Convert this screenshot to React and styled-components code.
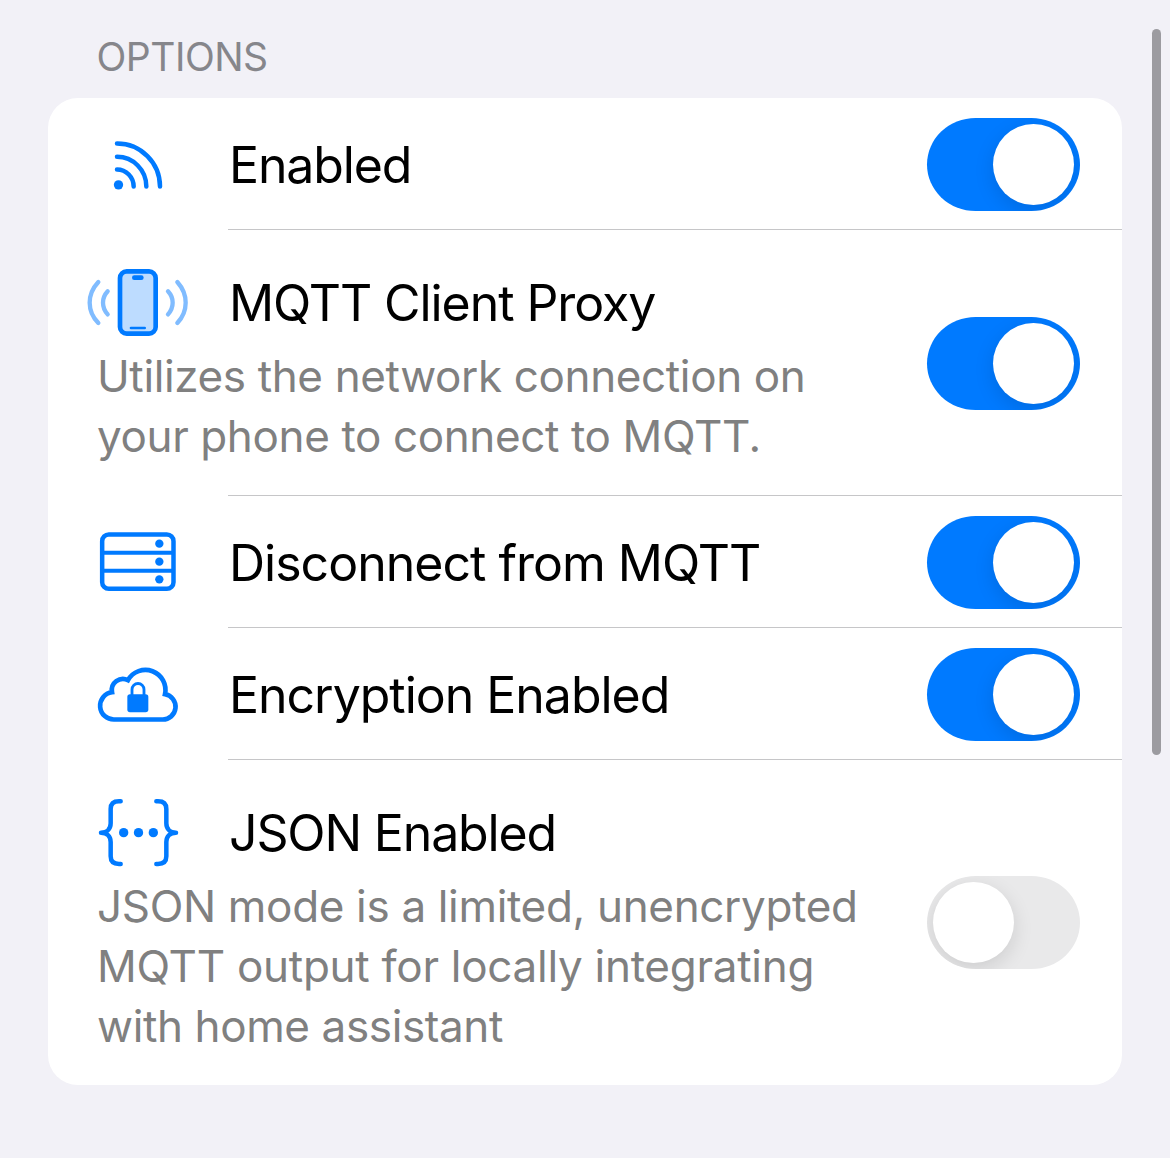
import React, { useState } from "react";
import styled, { createGlobalStyle } from "styled-components";

const BLUE = "#007aff";

const GlobalStyle = createGlobalStyle`
  * { box-sizing: border-box; }
  body {
    margin: 0;
    background: #f2f1f7;
    font-family: Inter, "Liberation Sans", sans-serif;
    font-feature-settings: "calt" 0;
  }
`;

const Screen = styled.main`
  position: relative;
  height: 1158px;
  padding: 26px 48px 0;
  overflow: hidden;
`;

const SectionTitle = styled.h2`
  margin: 0;
  height: 72px;
  padding-left: 48.5px;
  font-size: 39px;
  line-height: 62px;
  font-weight: 400;
  letter-spacing: -0.5px;
  color: #86868b;
`;

const Card = styled.section`
  background: #fff;
  border-radius: 30px;
  overflow: hidden;
`;

const Row = styled.div`
  display: flex;
  align-items: center;
  justify-content: space-between;
  height: ${(p) => p.$height}px;
  padding: 0 42px 0 49px;
`;

const Content = styled.div`
  display: flex;
  flex-direction: column;
  gap: 12px;
  padding-top: ${(p) => (p.$detailed ? 13 : 4)}px;
`;

const Heading = styled.div`
  display: flex;
  align-items: center;
  height: 61px;
`;

const Glyph = styled.svg`
  flex: none;
  width: 120px;
  height: 90px;
  margin: 0 29px 0 -17px;
  fill: none;
  stroke: ${BLUE};
  stroke-linecap: round;
  stroke-linejoin: round;
`;

const Label = styled.span`
  font-size: 50px;
  line-height: 61px;
  letter-spacing: ${(p) => p.$tracking}px;
  color: #000;
  white-space: nowrap;
`;

const Detail = styled.p`
  margin: 0;
  font-size: 44px;
  line-height: 60px;
  color: #808080;
  white-space: nowrap;
`;

const DetailLine = styled.span`
  display: block;
  letter-spacing: ${(p) => p.$tracking}px;
`;

const Divider = styled.div`
  height: 1px;
  margin-left: 180px;
  background: #c6c6c8;
`;

const Track = styled.button`
  display: flex;
  flex: none;
  align-items: center;
  justify-content: ${(p) => (p.$on ? "flex-end" : "flex-start")};
  width: 153px;
  height: 93px;
  margin-top: ${(p) => p.$drop}px;
  padding: 0 6px;
  border: 0;
  border-radius: 48.5px / 46.5px;
  background: ${(p) => (p.$on ? BLUE : "#e9e9ea")};
  overflow: hidden;
`;

const Knob = styled.span`
  width: 81px;
  height: 81px;
  border-radius: 50%;
  background: #fff;
  box-shadow: 0 6px 20px rgba(0, 0, 0, 0.12);
`;

const ScrollThumb = styled.div`
  position: absolute;
  top: 29px;
  right: 9px;
  width: 9px;
  height: 726px;
  border-radius: 5px;
  background: #9c9ba0;
`;

const BroadcastIcon = () => (
  <Glyph viewBox="0 1.5 360 270" strokeWidth="13.5">
    <circle cx="115.5" cy="193" r="14" fill={BLUE} stroke="none" />
    <path d="M111 147A50 51 0 0 1 161 198M111 109A88 89 0 0 1 199 198M111 69A129 129 0 0 1 240 198" />
  </Glyph>
);

const PhoneIcon = () => (
  <Glyph viewBox="0 9 360 270" strokeWidth="14">
    <rect x="120" y="49" width="107" height="187" rx="20" fill="#bddcff" />
    <path d="M163 68H184" />
    <path d="M153 219H194" strokeWidth="8" />
    <g stroke="#80bcff" strokeWidth="13">
      <path d="M83 109Q69 124 69 143T83 178M55 81Q29 109 29 143T55 204" />
      <path d="M264 109Q278 124 278 143T264 178M292 81Q317 109 317 143T292 204" />
    </g>
  </Glyph>
);

const ServerIcon = () => (
  <Glyph viewBox="0 -3 360 270" strokeWidth="13.5">
    <rect x="66.5" y="43.5" width="214" height="163" rx="20" />
    <path d="M68 98H279M68 152H279" strokeWidth="12" />
    <g fill={BLUE} stroke="none">
      <circle cx="238" cy="71" r="12.5" />
      <circle cx="238" cy="125" r="12.5" />
      <circle cx="238" cy="178" r="12.5" />
    </g>
  </Glyph>
);

const CloudLockIcon = () => (
  <Glyph viewBox="0 2.5 360 270" strokeWidth="14">
    <path
      strokeLinejoin="miter"
      d="M103 208A41.2 41.2 0 0 1 96 126A33.5 33.5 0 0 1 144 90A60 60 0 0 1 255 132A38.3 38.3 0 0 1 247 208Z"
    />
    <rect x="142" y="132" width="63" height="54" rx="8" fill={BLUE} stroke="none" />
    <path d="M156 134V118a18 18 0 0 1 36 0V134" strokeWidth="8.5" />
  </Glyph>
);

const BracesIcon = () => (
  <Glyph viewBox="0 9 360 270" strokeWidth="13.5">
    <path d="M122 49H117C100 49 92 57 92 72V115C92 132 80 143 63 143C80 143 92 154 92 171V214C92 230 100 237 117 237H122" />
    <path d="M229 49H234C251 49 259 57 259 72V115C259 132 271 143 288 143C271 143 259 154 259 171V214C259 230 251 237 234 237H229" />
    <g fill={BLUE} stroke="none">
      <circle cx="131" cy="143" r="14" />
      <circle cx="175.5" cy="143" r="14" />
      <circle cx="220" cy="143" r="14" />
    </g>
  </Glyph>
);

const OPTIONS = [
  { label: "Enabled", tracking: -1.15, Icon: BroadcastIcon, height: 131, drop: 2, on: true },
  {
    label: "MQTT Client Proxy",
    tracking: -1.08,
    Icon: PhoneIcon,
    height: 265,
    drop: 2,
    on: true,
    detail: [
      ["Utilizes the network connection on", -0.37],
      ["your phone to connect to MQTT.", -0.38],
    ],
  },
  { label: "Disconnect from MQTT", tracking: -0.99, Icon: ServerIcon, height: 131, drop: 2, on: true },
  { label: "Encryption Enabled", tracking: -1.02, Icon: CloudLockIcon, height: 131, drop: 2, on: true },
  {
    label: "JSON Enabled",
    tracking: -1.15,
    Icon: BracesIcon,
    height: 325,
    drop: 0,
    on: false,
    detail: [
      ["JSON mode is a limited, unencrypted", -0.33],
      ["MQTT output for locally integrating", -0.27],
      ["with home assistant", -0.38],
    ],
  },
];

function Toggle({ initial, label, drop }) {
  const [on, setOn] = useState(initial);
  return (
    <Track
      $on={on}
      $drop={drop}
      role="switch"
      aria-checked={on}
      aria-label={label}
      onClick={() => setOn(!on)}
    >
      <Knob />
    </Track>
  );
}

function Option({ label, tracking, Icon, height, drop, on, detail }) {
  return (
    <Row $height={height}>
      <Content $detailed={Boolean(detail)}>
        <Heading>
          <Icon />
          <Label $tracking={tracking}>{label}</Label>
        </Heading>
        {detail && (
          <Detail>
            {detail.map(([text, spacing]) => (
              <DetailLine key={text} $tracking={spacing}>{text}</DetailLine>
            ))}
          </Detail>
        )}
      </Content>
      <Toggle initial={on} label={label} drop={drop} />
    </Row>
  );
}

export default function App() {
  return (
    <>
      <GlobalStyle />
      <Screen>
        <SectionTitle>OPTIONS</SectionTitle>
        <Card>
          {OPTIONS.map((option, i) => (
            <React.Fragment key={option.label}>
              {i > 0 && <Divider />}
              <Option {...option} />
            </React.Fragment>
          ))}
        </Card>
        <ScrollThumb />
      </Screen>
    </>
  );
}
